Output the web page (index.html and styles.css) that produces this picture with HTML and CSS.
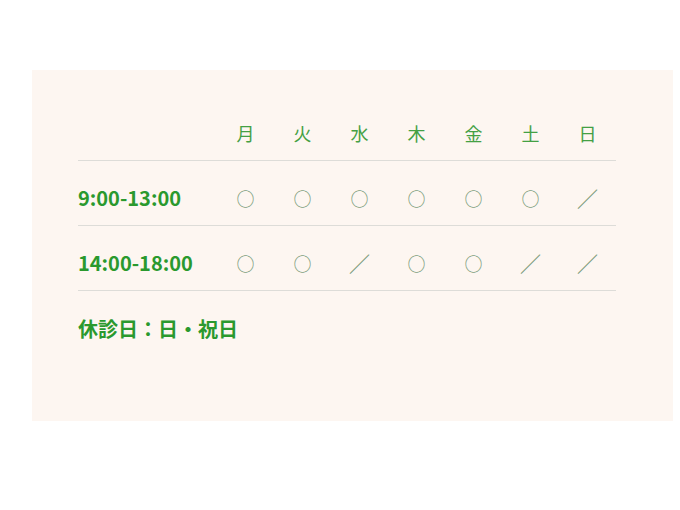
FILE: index.html
```html
<!DOCTYPE html>
<html lang="ja">
<head>
<meta charset="utf-8">
<link rel="stylesheet" href="styles.css">
</head>
<body>
<section class="card">
  <div class="schedule">
    <div class="row head">
      <div class="label"></div>
      <div class="day">月</div><div class="day">火</div><div class="day">水</div><div class="day">木</div><div class="day">金</div><div class="day">土</div><div class="day">日</div>
    </div>
    <div class="row">
      <div class="label">9:00-13:00</div>
      <div class="mark">○</div><div class="mark">○</div><div class="mark">○</div><div class="mark">○</div><div class="mark">○</div><div class="mark">○</div><div class="mark slash">／</div>
    </div>
    <div class="row">
      <div class="label">14:00-18:00</div>
      <div class="mark">○</div><div class="mark">○</div><div class="mark slash">／</div><div class="mark">○</div><div class="mark">○</div><div class="mark slash">／</div><div class="mark slash">／</div>
    </div>
  </div>
  <p class="closed">休診日：日・祝日</p>
</section>
</body>
</html>
```
FILE: styles.css
```css
html, body {
  margin: 0;
  padding: 0;
  background: #ffffff;
}
body {
  font-family: "Noto Sans CJK JP", "Noto Sans", sans-serif;
}
.card {
  margin: 70px 0 0 32px;
  width: 641px;
  height: 351px;
  box-sizing: border-box;
  padding: 50px 0 0 46px;
  background: #fdf6f1;
}
.schedule {
  width: 538px;
}
.row {
  display: grid;
  grid-template-columns: 139px repeat(7, 57px);
  align-items: center;
  border-bottom: 1px solid #dddcd8;
  padding: 24px 0 14px;
  line-height: 26px;
}
.row.head {
  padding: 0 0 14px;
}
.day {
  text-align: center;
  font-size: 18px;
  color: #44a044;
}
.label {
  font-size: 20px;
  font-weight: 700;
  color: #2a992e;
}
.mark {
  text-align: center;
  font-size: 18px;
  font-weight: 500;
  color: #7f9f80;
}
.mark.slash {
  font-size: 21px;
  color: #789b78;
}
.closed {
  margin: 25px 0 0;
  font-size: 20px;
  line-height: 26px;
  font-weight: 700;
  color: #2a992e;
}
```
